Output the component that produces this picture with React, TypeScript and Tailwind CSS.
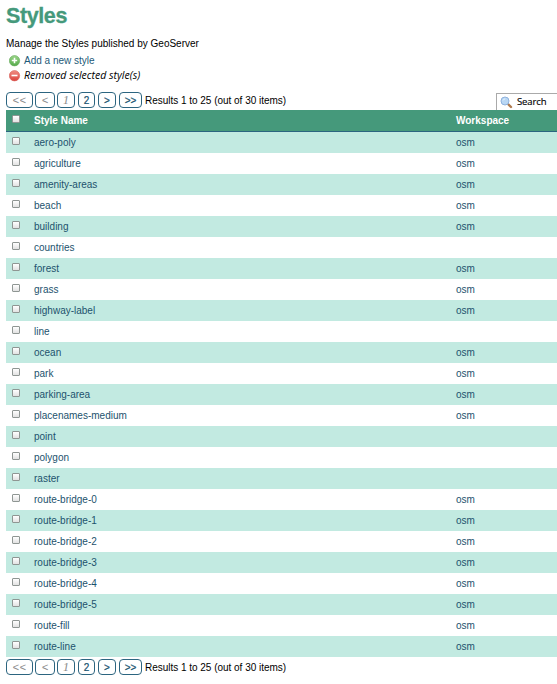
const styles: [string, boolean][] = [
  ['aero-poly', true], ['agriculture', true], ['amenity-areas', true], ['beach', true],
  ['building', true], ['countries', false], ['forest', true], ['grass', true],
  ['highway-label', true], ['line', false], ['ocean', true], ['park', true],
  ['parking-area', true], ['placenames-medium', true], ['point', false], ['polygon', false],
  ['raster', false], ['route-bridge-0', true], ['route-bridge-1', true], ['route-bridge-2', true],
  ['route-bridge-3', true], ['route-bridge-4', true], ['route-bridge-5', true],
  ['route-fill', true], ['route-line', true],
];

function Check() {
  return (
    <span className="mt-[5px] ml-[6px] block h-[8px] w-[8px] rounded-[1px] border border-[#8f9693] bg-linear-to-b from-white to-[#e2e2e2]" />
  );
}

function Pager() {
  const link = 'h-[16px] shrink-0 rounded-[4px] border border-[#2c6580] text-center leading-[15px] ';
  const off = 'italic text-[#8a8a8a]';
  const on = 'text-[#16516e] [-webkit-text-stroke:0.2px]';
  return (
    <div className="flex h-[16px] text-[10px]">
      <span className={link + off + ' w-[27px] text-[11px] tracking-[0.5px]'}>&lt;&lt;</span>
      <span className={link + off + ' ml-[2px] w-[20px] text-[11px]'}>&lt;</span>
      <span className={link + off + ' ml-[2px] w-[18px] font-["Liberation_Serif",serif] text-[12px]'}>1</span>
      <span className={link + on + ' ml-[3px] w-[17px]'}>2</span>
      <span className={link + on + ' ml-[3px] w-[18px]'}>&gt;</span>
      <span className={link + on + ' ml-[3px] w-[23px]'}>&gt;&gt;</span>
      <span className="ml-[3px] whitespace-nowrap leading-[17px] tracking-[-0.02px]">Results 1 to 25 (out of 30 items)</span>
    </div>
  );
}

function RoundIcon({ plus }: { plus?: boolean }) {
  return (
    <svg className="h-[12px] w-[12px] shrink-0" viewBox="0 0 12 12">
      <defs>
        <linearGradient id={plus ? 'green' : 'red'} x1="0" y1="0" x2="0" y2="1">
          <stop offset="0" stopColor={plus ? '#9ad487' : '#f08d83'} />
          <stop offset="1" stopColor={plus ? '#55aa4b' : '#da433d'} />
        </linearGradient>
      </defs>
      <circle cx="5.5" cy="5.7" r="5.2" fill={plus ? 'url(#green)' : 'url(#red)'} stroke={plus ? '#65aa5b' : '#d9625b'} strokeWidth=".6" />
      <path d={plus ? 'M2.8 5.5H8.2M5.5 2.8V8.2' : 'M2.5 5.5H8.5'} stroke="#fff" strokeWidth="1.6" />
    </svg>
  );
}

export default function App() {
  return (
    <div className='h-[684px] w-[557px] overflow-hidden bg-white pl-[6px] font-["Liberation_Sans",Arial,sans-serif] text-[10px] text-black'>
      <h1 className="h-[37px] pt-[3px] text-[21.5px] leading-[26px] font-bold tracking-[-0.4px] text-[#45997b] [-webkit-text-stroke:0.3px]">Styles</h1>
      <p className="h-[16px] leading-[14px]">Manage the Styles published by GeoServer</p>
      <div className="flex h-[15px] items-center gap-[3px] pl-[3px] text-[#1d5a78]">
        <RoundIcon plus />
        <span>Add a new style</span>
      </div>
      <div className="flex h-[15px] items-center gap-[3px] pl-[3px]">
        <RoundIcon />
        <span className='font-["Open_Sans",sans-serif] text-[10.5px] italic'>Removed selected style(s)</span>
      </div>
      <div className="flex h-[27px] justify-between pt-[9px]">
        <Pager />
        <div className='mt-[1px] flex h-[17px] w-[61px] items-center border border-r-0 border-b-0 border-[#aaa] pl-[3px] font-["Open_Sans",sans-serif]'>
          <svg className="h-[13px] w-[13px] shrink-0" viewBox="0 0 13 13">
            <path d="M8 8L11 11" stroke="#b07c50" strokeWidth="2.4" strokeLinecap="round" />
            <circle cx="5" cy="5" r="4" fill="#b9d7f4" stroke="#8fb2dd" strokeWidth="1" />
            <path d="M3 4.5Q3.5 3 5.3 2.8" fill="none" stroke="#e8f4ff" />
          </svg>
          <span className="ml-[4px] text-[9.5px] tracking-[-0.1px] [-webkit-text-stroke:0.15px]">Search</span>
        </div>
      </div>
      <div className="flex h-[22px] border-b border-[#2b6580] bg-[#45997b] leading-[21px] font-bold text-white">
        <div className="w-[28px]"><Check /></div>
        <div className="w-[422px]">Style Name</div>
        <div>Workspace</div>
      </div>
      {styles.map(([name, osm], i) => (
        <div key={name} className={'flex h-[21px] leading-[21px] text-[#1c526d] ' + (i % 2 ? 'bg-white' : 'bg-[#c2eae1]')}>
          <div className="w-[28px]"><Check /></div>
          <div className="w-[422px]">{name}</div>
          <div>{osm ? 'osm' : ''}</div>
        </div>
      ))}
      <div className="pt-[2px]"><Pager /></div>
    </div>
  );
}
